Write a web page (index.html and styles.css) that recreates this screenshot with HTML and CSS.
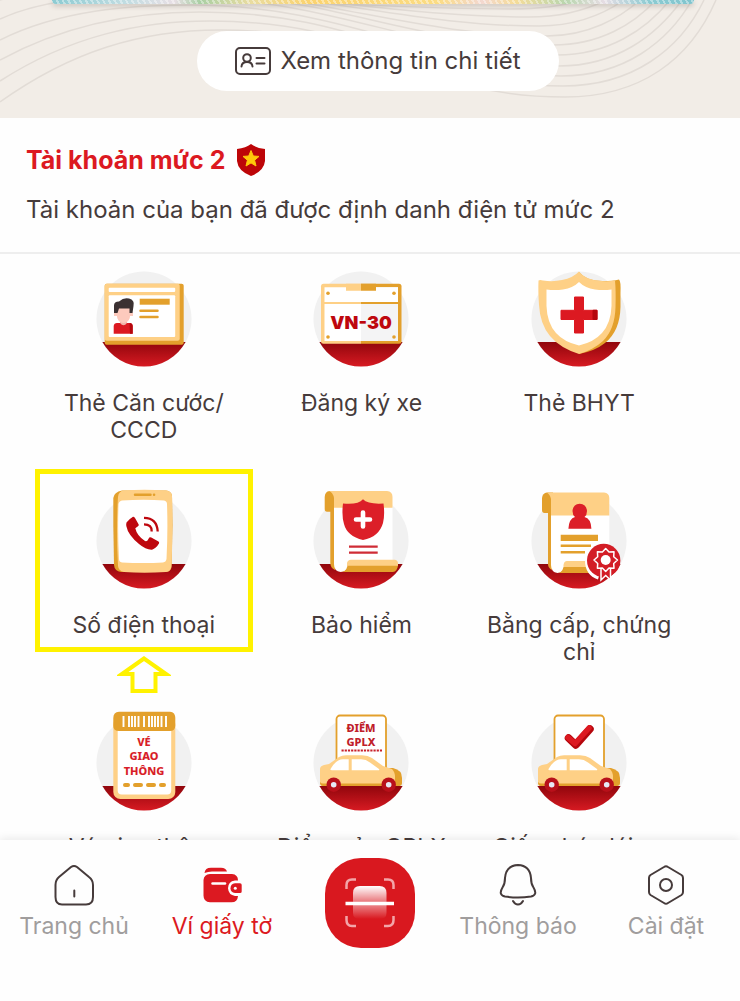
FILE: index.html
```html
<!DOCTYPE html>
<html lang="vi">
  <head>
    <meta charset="UTF-8" />
    <meta name="viewport" content="width=device-width, initial-scale=1.0" />
    <title>Ví giấy tờ</title>
    <link rel="stylesheet" href="styles.css">
  </head>
  <body>
    <!-- Shared icon parts -->
    <svg class="sprite" aria-hidden="true">
      <defs>
        <linearGradient id="red-base" x1="0" y1="0" x2="0" y2="1">
          <stop offset="0" stop-color="#90060c" />
          <stop offset="1" stop-color="#d71a22" />
        </linearGradient>
        <linearGradient id="scan-top" x1="0" y1="0" x2="0" y2="1">
          <stop offset="0" stop-color="#fff" />
          <stop offset="1" stop-color="#fff" stop-opacity="0.35" />
        </linearGradient>
        <linearGradient id="scan-bottom" x1="0" y1="0" x2="0" y2="1">
          <stop offset="0" stop-color="#fff" stop-opacity="0.5" />
          <stop offset="1" stop-color="#fff" stop-opacity="0" />
        </linearGradient>
      </defs>
      <symbol id="base" viewBox="0 0 120 104">
        <circle cx="60" cy="56" r="47.5" fill="#f1f1f1" />
        <path d="M18.4 79H101.6A47.5 47.5 0 0 1 18.4 79Z" fill="url(#red-base)" />
      </symbol>
      <symbol id="car" viewBox="0 0 120 104">
        <path d="M84 61H92Q101 63 101 71V76Q101 79 98 79H84Z" fill="#e3a02c" />
        <path d="M19 62Q19 59 23 58L28 57L38 50Q41 48.300 45 48.300H61Q67 48.300 71 51L82 59Q88 61 91 62Q94 65 94 70V79H22Q19 79 19 76Z" fill="#fed086" />
        <path d="M19 75Q20 76.500 22 76.500H100Q99 79 97 79H22Q19 79 19 75Z" fill="#e3a02c" />
        <path d="M29.500 62Q35 52.300 42 52.300H47.700V63.300H31Q29 63.300 29.500 62Z" fill="#fff" />
        <path d="M50.700 52.300H60Q65 52.300 69 55.500L78 62Q79 63.300 77 63.300H50.700Z" fill="#fff" />
        <g fill="#b8101a">
          <circle cx="32.700" cy="77.700" r="7.200" />
          <circle cx="87.700" cy="77.700" r="7.200" />
        </g>
        <g fill="#e6e8f5">
          <circle cx="32.700" cy="77.700" r="2.800" />
          <circle cx="87.700" cy="77.700" r="2.800" />
        </g>
      </symbol>
    </svg>

    <div class="screen">
      <main class="content">
        <!-- Card footer -->
        <section class="hero">
          <svg class="hero-waves" viewBox="0 0 740 118" preserveAspectRatio="none" aria-hidden="true">
            <path d="M0 102C70 52 140 30 220 30C380 30 420 97 565 97C640 97 690 60 716 0" />
            <path d="M0 81C70 36 140 21 210 21C370 21 420 86 563 86C632 86 680 50 704 0" />
            <path d="M0 60C70 22 140 12 200 12C360 12 420 76 561 76C624 76 668 42 692 0" />
            <path d="M0 40C60 10 130 5 190 5C350 5 420 66 559 66C616 66 656 36 682 0" />
            <path d="M0 19C50 -4 120 -6 190 -2C340 0 420 55 557 55C608 55 646 30 670 0" />
            <path d="M0 0C80 -20 200 -10 240 -2C350 4 420 45 553 45C600 45 634 24 656 0" />
            <path d="M230 -6C340 2 430 36 547 36C588 36 620 18 640 0" />
            <path d="M240 -6C340 0 430 26 539 26C576 26 604 14 624 0" />
            <path d="M260 -4C350 2 430 17 529 17C560 17 586 10 606 0" />
            <path d="M290 2C350 4 430 9 510 9C540 9 566 5 580 0" />
          </svg>
          <div class="id-card"></div>
          <button class="detail-button" type="button">
            <svg width="36" height="28" viewBox="0 0 36 28" aria-hidden="true">
              <g fill="none" stroke="#463b3b" stroke-width="2" stroke-linecap="round">
                <rect x="1" y="1" width="34" height="26" rx="4" />
                <circle cx="12" cy="11" r="3.800" />
                <path d="M6.500 19.500C7 13.500 17 13.500 17.500 19.500M21.500 11H29.500M21.500 16.500H29.500" />
              </g>
            </svg>
            Xem thông tin chi tiết
          </button>
        </section>

        <!-- Account level -->
        <section class="account">
          <h1 class="account-title">
            Tài khoản mức 2
            <svg width="30" height="32" viewBox="0 0 30 32" aria-hidden="true">
              <path d="M15 0Q20 4 29 5V17Q28 27 15 32Q2 27 1 17V5Q10 4 15 0Z" fill="#bd0508" />
              <path d="M15 6.500L17.300 12L23 12.400L18.600 16.200L20 22L15 18.900L10 22L11.400 16.200L7 12.400L12.700 12Z" fill="#ffc80a" stroke="#ffc80a" stroke-linejoin="round" />
            </svg>
          </h1>
          <p class="account-text">Tài khoản của bạn đã được định danh điện tử mức 2</p>
        </section>

        <!-- Documents -->
        <section class="documents">
          <a class="document" href="#">
            <svg class="document-icon" viewBox="0 0 120 104" aria-hidden="true">
              <use href="#base" />
              <rect x="20.700" y="20.700" width="79" height="61" rx="2" fill="#e3a02c" />
              <rect x="20.700" y="20.700" width="75" height="57" rx="2" fill="#fed086" />
              <rect x="24.700" y="24.700" width="66.500" height="4.200" rx="1" fill="#fff" />
              <rect x="24.700" y="32.300" width="66.500" height="41.700" rx="1" fill="#fff" />
              <path d="M29.700 70.700V63Q30 60 33 60H45.500Q48.500 60 48.700 63V70.700Z" fill="#dc1921" />
              <path d="M45.500 60Q48.500 60 48.700 63V70.700H46Z" fill="#b5070d" />
              <path d="M36 56H43V60Q39.500 64.500 36 60Z" fill="#f0b3aa" />
              <path d="M30 49.500H49V53H46Q45 60 39.500 60Q34 60 33 53H30Z" fill="#fdcabd" />
              <path d="M33 44H46V53Q45 59 39.500 59.500Q34 59 33 53Z" fill="#fdcabd" />
              <path d="M30 50V42.500Q30 38.500 35 38.500Q40 34 45 35.500Q51 37 49.500 43L48.500 50H45.500V45.500H35L33.500 50Z" fill="#3b3132" />
              <path d="M55.700 35.700H85.700V41.700H55.700Z" fill="#e3a02c" />
              <path d="M56.500 47.700H73.500M56.500 54H73.500" stroke="#e3a02c" stroke-width="2.500" stroke-linecap="round" />
            </svg>
            <span class="document-label">Thẻ Căn cước/ CCCD</span>
          </a>

          <a class="document" href="#">
            <svg class="document-icon" viewBox="0 0 120 104" aria-hidden="true">
              <use href="#base" />
              <path d="M60 20.700H22.500Q20 20.700 20 23.200V78.200Q20 80.700 22.500 80.700H60Z" fill="#fed086" />
              <path d="M60 20.700H98Q100.500 20.700 100.500 23.200V78.200Q100.500 80.700 98 80.700H60Z" fill="#e3a02c" />
              <path d="M23.500 24.200H60V78H23.500Z" fill="#fff" />
              <path d="M60 24.200H97V78H60Z" fill="#f4f4f5" />
              <path d="M60 24.200H97V39H60Z" fill="#fff" />
              <path d="M45 20.700H60V27.700H45ZM23 39H60V41H23Z" fill="#fed086" />
              <path d="M60 20.700H75V27.700H60ZM60 39H98V41H60Z" fill="#e3a02c" />
              <g fill="#e3a02c">
                <circle cx="27" cy="30.300" r="1.800" />
                <circle cx="93" cy="30.300" r="1.800" />
                <circle cx="27" cy="74" r="1.800" />
                <circle cx="93" cy="74" r="1.800" />
              </g>
              <text class="plate-text" x="60" y="66">VN-30</text>
            </svg>
            <span class="document-label">Đăng ký xe</span>
          </a>

          <a class="document" href="#">
            <svg class="document-icon" viewBox="0 0 120 104" aria-hidden="true">
              <use href="#base" />
              <path d="M60 9Q67 18 84 18Q94 18 100 16.500Q102 18 101.500 30V44Q101 68 86 80Q76 88 60 91Z" fill="#e3a02c" />
              <path d="M60 8.500Q66 17 82 18Q91 18.500 96 17.500Q97 28 96.500 44Q96 66 84 78Q74 87 60 91Q41 85 31 73Q21 61 20 42Q19 28 19.500 17.500Q21 16.500 24 17.500Q34 19 43 17Q54 15 60 8.500Z" fill="#fed086" />
              <path d="M60 19Q66 25 76 26.500Q84 27.500 92.500 26.500V43Q92 60 83 70Q75 79 60 82.500Q45 79 37 70Q28 60 27.500 43V26.500Q36 27.500 44 26.500Q54 25 60 19Z" fill="#fff" />
              <path d="M55.500 34H64.500V47.300H78V56.500H64.500V70H55.500V56.500H42V47.300H55.500Z" fill="#dc1921" stroke="#dc1921" stroke-linejoin="round" />
              <rect x="73.500" y="46.800" width="5" height="10.200" rx="1" fill="#b5070d" />
            </svg>
            <span class="document-label">Thẻ BHYT</span>
          </a>

          <a class="document highlighted" href="#">
            <svg class="document-icon" viewBox="0 0 120 104" aria-hidden="true">
              <use href="#base" />
              <path d="M38 5.500H82Q87.500 6 88 11L88.500 40L87.500 82Q87 86.500 82 87H37Q30.500 86 30 80L29.300 40V13Q30 7 38 5.500Z" fill="#e3a02c" />
              <path d="M40 5.500Q60 4 82 5.500Q87.500 6 88 11Q89 45 87.500 81Q87 86.500 82 87Q60 88.500 40 87Q34.500 86 34 81Q32 45 34 12Q34.500 6 40 5.500Z" fill="#fed086" />
              <path d="M38 15.500Q60 14 80 15.500Q83 16 83 19Q84 46 82.500 74Q82 77 79 77.500Q60 78.500 38 77.500Q35 77 35 74Q33.500 46 34.500 19Q35 16 38 15.500Z" fill="#fff" />
              <path d="M51 9.700H66.500M70 9.700H70.100" stroke="#e3a02c" stroke-width="2.500" stroke-linecap="round" />
              <path d="M49 31.700Q50 31.500 51 33L54.700 39.500Q55 40.500 54 41.300L51.300 43.300Q53 51 61 56Q62.500 56.500 63.500 55.500L65.300 52.500Q66.300 52 67.300 52.500L74.500 56.500Q75.500 57.300 75 58.500Q72 63.500 68 64.700Q62 65 55 59Q44 50 42.300 41Q42 39 42.500 37.500Q45 34 49 31.700Z" fill="#be070e" />
              <path d="M60 32.800Q73 33 73.700 46.500M60 39.300Q68 39.500 67.700 46.500" fill="none" stroke="#be070e" stroke-width="2.300" />
            </svg>
            <span class="document-label">Số điện thoại</span>
            <svg class="pointer-arrow" width="54" height="40" viewBox="0 0 54 40" aria-hidden="true">
              <path d="M27 3.500L5 19H15.500V36H38.500V19H49Z" />
            </svg>
          </a>

          <a class="document" href="#">
            <svg class="document-icon" viewBox="0 0 120 104" aria-hidden="true">
              <use href="#base" />
              <path d="M28.500 6H34V26.700H26Q23.700 26.700 23.700 24V12Q24 6.500 28.500 6Z" fill="#e3a02c" />
              <path d="M29.300 24H34V85Q29.300 83 29.300 78Z" fill="#e3a02c" />
              <path d="M33 18H91.500V80H48Q47 87 39.700 87Q33 86.500 33 79Z" fill="#fff" />
              <path d="M28 6H86Q91.500 6.500 91.500 12V22.700H33V13Q32 7.500 28 6Z" fill="#fed086" />
              <path d="M50 74.700H94Q97 75 97 79V81H46V78Q46.500 75 50 74.700Z" fill="#fed086" />
              <path d="M46.500 80.700H97Q96 86.500 92 87H39.700Q45 87 46.500 80.700Z" fill="#e3a02c" />
              <path d="M62 14.300Q67 19.500 82.500 18.500Q84 30 82 38Q78 52 62 55Q46 51 43 39Q40.500 31 42 18.500Q57 20 62 14.300Z" fill="#dc1f28" />
              <path d="M62 27.500V41.500M55 34.500H69" stroke="#fff" stroke-width="4.600" stroke-linecap="round" />
              <path d="M48 61.700H76.700M48 67.700H76.700" stroke="#cf2c36" stroke-width="2.200" />
            </svg>
            <span class="document-label">Bảo hiểm</span>
          </a>

          <a class="document" href="#">
            <svg class="document-icon" viewBox="0 0 120 104" aria-hidden="true">
              <use href="#base" />
              <path d="M28 7.500H34V28H25.500Q23 28 23 25V13Q23.500 8 28 7.500Z" fill="#e3a02c" />
              <path d="M29 26H33V85Q29 83 29 79Z" fill="#e3a02c" />
              <path d="M32 20H90.300V80H46Q45 88 38.500 88Q32 87 32 80Z" fill="#fff" />
              <path d="M27.500 7.500H85Q90.300 8 90.300 13V30.400H32V14Q31 9 27.500 7.500Z" fill="#fed086" />
              <path d="M48 76H70V82H44.500V80Q45 76 48 76Z" fill="#fed086" />
              <path d="M44.500 82H76V88H38.500Q43 88 44.500 82Z" fill="#e3a02c" />
              <path d="M49.400 43.700Q50 33.500 56 32Q53.500 30 53.500 26Q54 19 60.700 18.700Q67.500 19 68 26Q68 30 65.500 32Q72 33.500 72.400 43.700Z" fill="#dc1f28" />
              <path d="M41.700 49.700H79V56H41.700Z" fill="#e3a02c" />
              <path d="M41.700 60.700H72M41.700 67.300H66" stroke="#e3a02c" stroke-width="2.400" />
              <path d="M84 56.500A19 19 0 0 0 66 75.500Q66 90 79 94.500L84.700 75.500L90.300 58Z" fill="#fff" />
              <circle cx="84.700" cy="75.500" r="16.700" fill="#d31d26" />
              <path d="M82 83V95L86.700 90.500L91.500 95V83" fill="#d31d26" stroke="#fff" stroke-width="1.500" />
              <path d="M86.700 63.500L90 67L95 66.700L94.700 71.700L98.500 75L94.700 78.500L95 83.300L90 83L86.700 86.500L83.400 83L78.400 83.300L78.700 78.500L75 75L78.700 71.700L78.400 66.700L83.400 67Z" fill="#d31d26" stroke="#fff" stroke-width="1.500" stroke-linejoin="round" />
              <circle cx="86.700" cy="75" r="5" fill="#fff" />
            </svg>
            <span class="document-label">Bằng cấp, chứng chỉ</span>
          </a>

          <a class="document" href="#">
            <svg class="document-icon" viewBox="0 0 120 104" aria-hidden="true">
              <use href="#base" />
              <rect x="29.300" y="10" width="62" height="82" rx="7" fill="#fed086" />
              <rect x="33.700" y="18" width="53.500" height="69.500" rx="4" fill="#fff" />
              <path d="M35 4.700H86Q91.300 5 91.300 11V19Q91 24 86 24H35Q29.300 24 29.300 19V11Q29.300 5 35 4.700Z" fill="#e3a02c" />
              <path d="M39.500 9V20M45 9V20M48 9V20M51 9V20M54.500 9V20M60 9V20M65 9V20M68 9V20M71 9V20M74 9V20M77.500 9V20M82 9V20" stroke="#fff" stroke-width="1.900" />
              <g class="ticket-text">
                <text x="60" y="39">VÉ</text>
                <text x="60" y="53">GIAO</text>
                <text x="60" y="68">THÔNG</text>
              </g>
              <path d="M41 78H44M51 78H57M64 78H70M77 78H80" stroke="#e3a02c" stroke-width="4" stroke-linecap="round" />
            </svg>
            <span class="document-label">Vé giao thông</span>
          </a>

          <a class="document" href="#">
            <svg class="document-icon" viewBox="0 0 120 104" aria-hidden="true">
              <use href="#base" />
              <rect x="35.500" y="8.500" width="49.500" height="65" rx="3.500" fill="#fff" stroke="#e3a02c" stroke-width="1.800" />
              <g class="ticket-text dark">
                <text x="60" y="25">ĐIỂM</text>
                <text x="60" y="39">GPLX</text>
              </g>
              <path d="M40.500 43.500H81" stroke="#c8202a" stroke-width="2.200" stroke-dasharray="2.200 1" />
              <use href="#car" />
            </svg>
            <span class="document-label">Điểm của GPLX</span>
          </a>

          <a class="document" href="#">
            <svg class="document-icon" viewBox="0 0 120 104" aria-hidden="true">
              <use href="#base" />
              <rect x="35.500" y="8.500" width="49.500" height="65" rx="3.500" fill="#fff" stroke="#e3a02c" stroke-width="1.800" />
              <path d="M49.500 31L56.800 38L71 22" fill="none" stroke="#b5070d" stroke-width="7.500" stroke-linecap="round" stroke-linejoin="round" />
              <path d="M49 30.500L56 36.500L70 21" fill="none" stroke="#dc1921" stroke-width="5.500" stroke-linecap="round" stroke-linejoin="round" />
              <use href="#car" />
            </svg>
            <span class="document-label">Giấy phép lái xe</span>
          </a>
        </section>
      </main>

      <!-- Bottom navigation -->
      <nav class="tab-bar">
        <a class="tab" href="#">
          <svg class="tab-icon" viewBox="0 0 44 44" aria-hidden="true">
            <path d="M19 4Q22 2 25 4L37 14Q41 17 41 22V34Q41 41.500 34 41.500H10Q3.500 41.500 3.500 34V22Q3.500 17 7 14ZM22.300 27.500V33.500" />
          </svg>
          Trang chủ
        </a>
        <a class="tab active" href="#">
          <svg class="tab-icon solid" viewBox="0 0 44 44" aria-hidden="true">
            <path d="M4.500 10Q5 4.700 11 4.700H21Q26 4.700 27 8.500H12Q8 8.500 4.500 10Z" />
            <path d="M10 11H32Q38 11.500 38 17.500H35Q28 18.500 28 25.300Q28.500 32 35 33H38Q37.500 39.300 31.500 39.300H10Q3.500 39 3.500 32.500V17Q4 11.500 10 11Z" />
            <path d="M35 20.300H40Q41.700 20.300 41.700 22V28.500Q41.700 30 40 30H35Q30.500 29.500 30.500 25.200Q30.500 21 35 20.300Z" />
            <circle cx="35.300" cy="25.200" r="1.500" fill="#fff" />
            <path d="M12.500 20.500H25" stroke="#fff" stroke-width="2.500" stroke-linecap="round" />
          </svg>
          Ví giấy tờ
        </a>
        <div class="tab-center">
          <button class="scan-button" type="button" aria-label="Quét mã">
            <svg width="90" height="90" viewBox="0 0 90 90" aria-hidden="true">
              <path d="M21.500 31V27Q21.500 21.500 27 21.500H31M59 21.500H63Q68.500 21.500 68.500 27V31M68.500 58V62Q68.500 68 63 68H59M31 68H27Q21.500 68 21.500 62V58" fill="none" stroke="#f3a5a9" stroke-width="2.500" />
              <path d="M28 45.500V35Q28 28 35 28H54.500Q61.500 28 61.500 35V45.500Z" fill="url(#scan-top)" />
              <path d="M28 46H61.500V55Q61.500 61 54.500 61H35Q28 61 28 55Z" fill="url(#scan-bottom)" />
              <path d="M20.500 45.500H69" stroke="#fff" stroke-width="3.500" />
            </svg>
          </button>
        </div>
        <a class="tab" href="#">
          <svg class="tab-icon" viewBox="0 0 44 44" aria-hidden="true">
            <path d="M22 2Q34 2.500 35 15Q35 21 37.500 24.500Q42 32 35 33.500Q22 35.500 9 33.500Q2 32 6.500 24.500Q9 21 9 15Q10 2.500 22 2ZM17 38Q19 41.500 22 41.500Q25 41.500 27 38" />
          </svg>
          Thông báo
        </a>
        <a class="tab" href="#">
          <svg class="tab-icon" viewBox="0 0 44 44" aria-hidden="true">
            <path d="M20 4Q22 2.500 24 4L37.500 12Q39 13 39 15V29Q39 31 37.500 32L24 40Q22 41.500 20 40L6.500 32Q5 31 5 29V15Q5 13 6.500 12Z" />
            <circle cx="22" cy="22" r="6" />
          </svg>
          Cài đặt
        </a>
      </nav>
    </div>
  </body>
</html>
```

FILE: styles.css
```css
/* General Styling */
*,
*::before {
  box-sizing: border-box;
}

body {
  margin: 0;
  font-family: Inter, "Noto Sans", sans-serif;
  font-size: 24px;
  line-height: 32px;
  color: #463b3b;
  background-color: #fefefe;
}

a {
  color: inherit;
  text-decoration: none;
}

button {
  border: none;
  padding: 0;
  font: inherit;
  color: inherit;
  cursor: pointer;
}

svg {
  display: block;
  flex-shrink: 0;
}

.sprite {
  position: absolute;
  width: 0;
  height: 0;
}

.screen {
  display: flex;
  flex-direction: column;
  height: 100vh;
}

.content {
  flex: 1;
  min-height: 0;
  overflow: hidden;
}

/* Card footer */
.hero {
  position: relative;
  display: flex;
  flex-direction: column;
  align-items: center;
  padding: 0 46px 27px 52px;
  background-color: #f2ede7;
  overflow: hidden;
}

.hero-waves {
  position: absolute;
  top: 0;
  left: 0;
  width: 100%;
  height: 100%;
  fill: none;
  stroke: #e2dcd6;
  stroke-width: 1.5;
}

.id-card {
  position: relative;
  width: 100%;
  height: 4px;
  border-radius: 0 0 12px 12px;
  background:
    repeating-linear-gradient(60deg, rgba(255, 255, 255, 0.4) 0 2px, transparent 2px 5px),
    linear-gradient(90deg, #8ccbd2, #c3dde2 12%, #e8dfe5 19%, #a9cfa4 23%, #e9dca0 31%, #fbd36f 40%, #fbdc83 60%, #f3d8d0 67%, #f6dc98 72%, #b9d6ae 80%, #e6dde4 86%, #8ccbd2 93%, #7fc4cd);
  box-shadow: 0 2px 5px rgba(90, 80, 70, 0.3);
}

.detail-button {
  position: relative;
  display: flex;
  align-items: center;
  gap: 9px;
  margin: 27px 0 0 10px;
  padding: 14px 38px;
  border-radius: 30px;
  background-color: #fff;
}

/* Account level */
.account {
  padding: 26px;
  border-bottom: 2px solid #eeeeee;
}

.account-title {
  display: flex;
  align-items: center;
  gap: 11px;
  margin: 0 0 18px;
  font-size: 25px;
  font-weight: 700;
  color: #dc1921;
}

.account-text {
  margin: 0;
}

/* Documents */
.documents {
  display: grid;
  grid-template-columns: repeat(3, 1fr);
  row-gap: 41px;
  padding: 9px 52px 0 35px;
}

.document {
  position: relative;
  display: flex;
  flex-direction: column;
  align-items: center;
  gap: 23px;
}

.document-icon {
  width: 120px;
  height: 104px;
}

.document-label {
  max-width: 190px;
  min-height: 54px;
  font-size: 23px;
  line-height: 27px;
  text-align: center;
}

.plate-text {
  font-size: 18px;
  font-weight: 900;
  text-anchor: middle;
  fill: #be070e;
}

.ticket-text {
  font-family: "Noto Sans", sans-serif;
  font-size: 11px;
  font-weight: 800;
  text-anchor: middle;
  fill: #d81e29;
}

.ticket-text.dark {
  fill: #c0202a;
}

/* Yellow frame around the selected document */
.highlighted::before {
  content: "";
  position: absolute;
  top: -16px;
  left: 0;
  width: 100%;
  height: 183px;
  border: 5px solid #fff200;
}

.pointer-arrow {
  position: absolute;
  top: 170px;
  left: 50%;
  margin-left: -27px;
  fill: none;
  stroke: #fff200;
  stroke-width: 4;
}

/* Bottom navigation */
.tab-bar {
  position: relative;
  display: flex;
  align-items: flex-start;
  height: 161px;
  padding-top: 18px;
  font-size: 23px;
  background-color: #fefefe;
  box-shadow: 0 -2px 8px rgba(0, 0, 0, 0.08);
}

.tab,
.tab-center {
  flex: 1;
  display: flex;
  flex-direction: column;
  align-items: center;
}

.tab {
  gap: 3px;
  padding-top: 5px;
  color: #a09d9d;
  white-space: nowrap;
}

.tab.active {
  color: #dc1921;
}

.tab-icon {
  width: 44px;
  height: 44px;
  fill: none;
  stroke: #463b3b;
  stroke-width: 2;
  stroke-linecap: round;
  stroke-linejoin: round;
}

.tab-icon.solid {
  fill: #dc1921;
  stroke: none;
}

.scan-button {
  width: 90px;
  height: 90px;
  border-radius: 36px;
  background-color: #d9181f;
}
```
